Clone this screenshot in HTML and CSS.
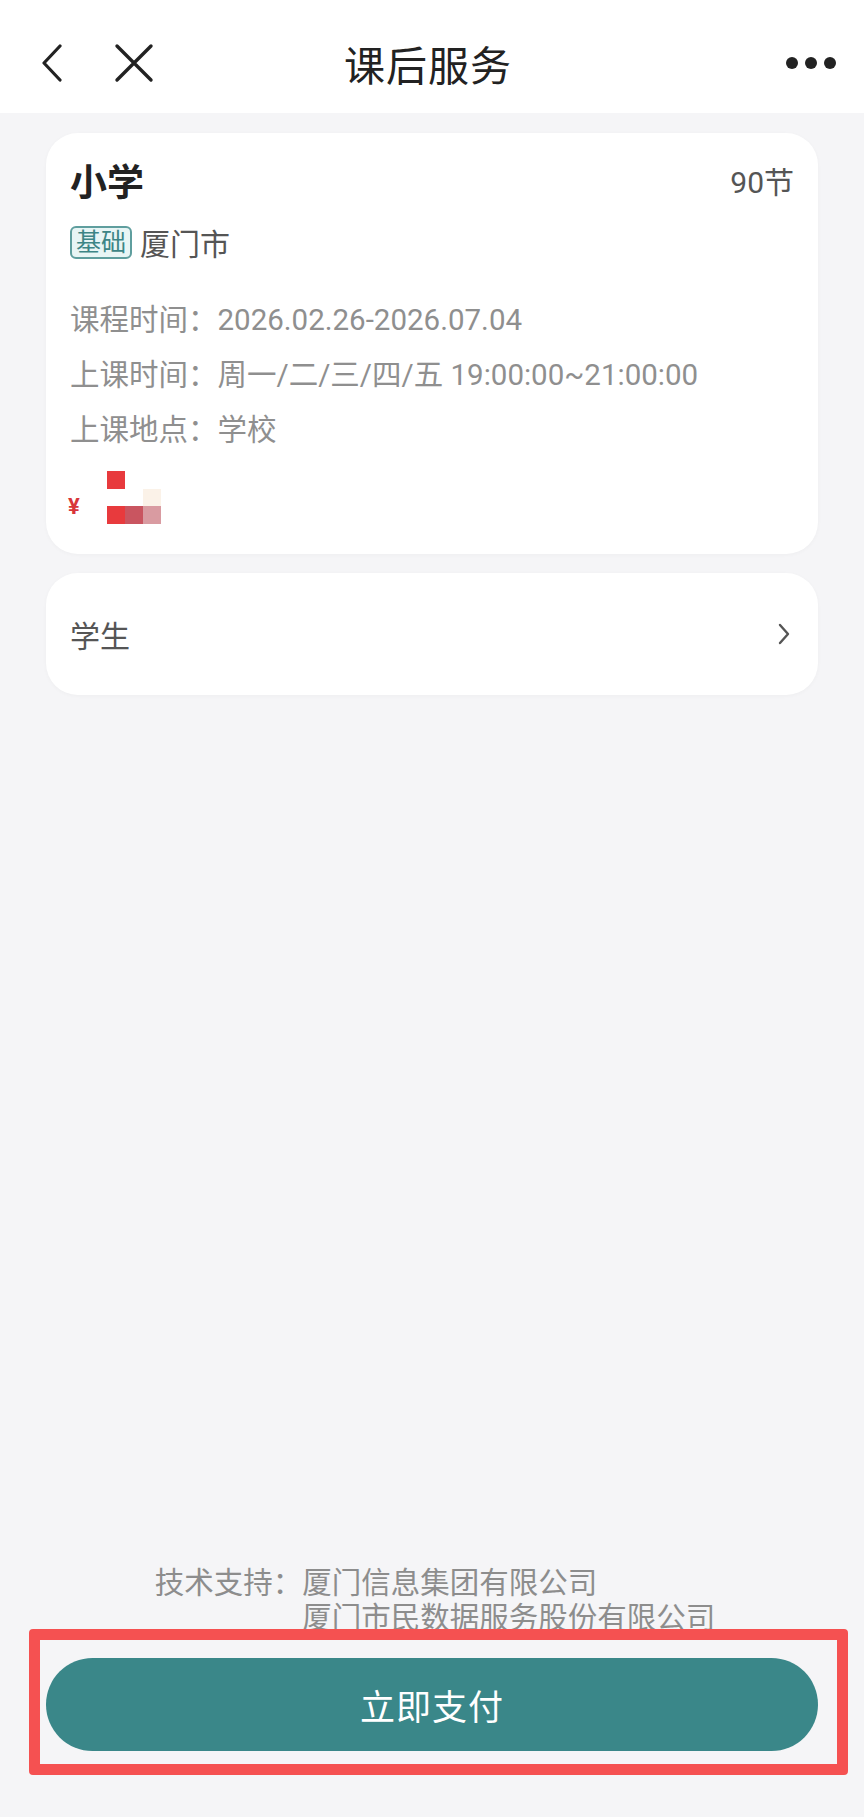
FILE: index.html
```html
<!DOCTYPE html>
<html lang="zh-CN">
<head>
<meta charset="utf-8">
<title>课后服务</title>
<link rel="stylesheet" href="styles.css">
</head>
<body>
<div class="page">
  <header class="topbar">
    <div class="nav-left">
      <svg class="icon-back" width="24" height="38" viewBox="0 0 24 38"><path d="M20 2 L4 19 L20 36" fill="none" stroke="#222" stroke-width="3.2" stroke-linecap="round" stroke-linejoin="round"/></svg>
      <svg class="icon-close" width="40" height="40" viewBox="0 0 40 40"><path d="M3 3 L37 37 M37 3 L3 37" fill="none" stroke="#222" stroke-width="3.4" stroke-linecap="round"/></svg>
    </div>
    <h1 class="title">课后服务</h1>
    <div class="more"><span></span><span></span><span></span></div>
  </header>

  <main class="content">
    <section class="card course">
      <div class="course-head">
        <span class="course-name">小学</span>
        <span class="course-count">90节</span>
      </div>
      <div class="course-loc">
        <span class="tag">基础</span>
        <span class="city">厦门市</span>
      </div>
      <ul class="info">
        <li>课程时间：2026.02.26-2026.07.04</li>
        <li>上课时间：周一/二/三/四/五 19:00:00~21:00:00</li>
        <li>上课地点：学校</li>
      </ul>
      <div class="price">
        <span class="yen">¥</span>
        <div class="mosaic">
          <i class="c1"></i><i></i><i></i>
          <i></i><i></i><i class="c5"></i>
          <i class="c1"></i><i class="c2"></i><i class="c3"></i>
        </div>
      </div>
    </section>

    <section class="card student">
      <span class="student-label">学生</span>
      <svg class="icon-arrow" width="12" height="22" viewBox="0 0 12 22"><path d="M2 2 L10 11 L2 20" fill="none" stroke="#555" stroke-width="2.4" stroke-linecap="round" stroke-linejoin="round"/></svg>
    </section>
  </main>

  <footer class="footer">
    <div class="support">
      <span class="support-label">技术支持：</span>
      <div class="support-names">
        <span>厦门信息集团有限公司</span>
        <span>厦门市民数据服务股份有限公司</span>
      </div>
    </div>
    <div class="highlight">
      <button class="pay">立即支付</button>
    </div>
  </footer>
</div>
</body>
</html>
```

FILE: styles.css
```css
* { box-sizing: border-box; }
html, body { margin: 0; padding: 0; }
body {
  background: #f5f5f7;
  font-family: Roboto, "Noto Sans CJK SC", "Noto Sans", sans-serif;
  color: #222;
}
.page {
  min-height: 1817px;
  display: flex;
  flex-direction: column;
}
.topbar {
  height: 113px;
  background: #fff;
  display: grid;
  grid-template-columns: 1fr auto 1fr;
  align-items: center;
  padding: 12px 28px 0 28px;
}
.nav-left {
  display: flex;
  align-items: center;
  gap: 50px;
  padding-left: 12px;
}
.icon-back { display: block; }
.icon-close { display: block; }
.title {
  margin: 0 8px 0 0;
  font-size: 41px;
  font-weight: 400;
  color: #222;
  letter-spacing: 1px;
}
.more {
  justify-self: end;
  display: flex;
  gap: 7px;
}
.more span {
  width: 12px;
  height: 12px;
  border-radius: 50%;
  background: #222;
}
.content {
  flex: 1;
  padding: 20px 46px 0;
  display: flex;
  flex-direction: column;
  gap: 19px;
}
.card {
  background: #fff;
  border-radius: 32px;
  box-shadow: 0 1px 4px rgba(0,0,0,0.03);
}
.course {
  padding: 20px 24px 30px 24px;
}
.course-head {
  height: 54px;
  display: flex;
  align-items: center;
  justify-content: space-between;
}
.course-name {
  font-size: 37px;
  font-weight: 700;
  color: #222;
}
.course-count {
  font-size: 30px;
  color: #555;
}
.course-loc {
  margin-top: 15px;
  height: 40px;
  display: flex;
  align-items: center;
  gap: 8px;
}
.tag {
  font-size: 25px;
  line-height: 29px;
  padding: 0 4px;
  border: 2px solid #5f9e9e;
  border-radius: 6px;
  background: #e8f5f5;
  color: #3d8586;
}
.city {
  font-size: 30px;
  color: #555;
}
.info {
  list-style: none;
  margin: 31px 0 0;
  padding: 0;
}
.info li {
  font-size: 29.5px;
  line-height: 55px;
  color: #8f8f8f;
  white-space: nowrap;
}
.price {
  margin-top: 13px;
  display: flex;
  align-items: flex-end;
  gap: 27px;
}
.yen {
  font-size: 22px;
  font-weight: 700;
  line-height: 26px;
  color: #d8363a;
  margin-bottom: 4px;
  margin-left: -2px;
}
.mosaic {
  display: grid;
  grid-template-columns: repeat(3, 18px);
  grid-template-rows: repeat(3, 17.5px);
}
.mosaic i { display: block; }
.mosaic .c1 { background: #e83a3d; }
.mosaic .c2 { background: #c95560; }
.mosaic .c3 { background: #d99ba1; }
.mosaic .c5 { background: #fbf2e8; }
.student {
  height: 122px;
  padding: 0 28px 0 24px;
  display: flex;
  align-items: center;
  justify-content: space-between;
}
.student-label {
  font-size: 30px;
  color: #555;
}
.footer {
  display: flex;
  flex-direction: column;
  align-items: center;
}
.support {
  display: flex;
  font-size: 29.5px;
  line-height: 35px;
  color: #8d8d8d;
  margin-left: 6px;
}
.support-names {
  display: flex;
  flex-direction: column;
}
.highlight {
  align-self: stretch;
  margin: -7px 16px 42px 29px;
  border: 11px solid #f55151;
  border-radius: 4px;
  padding: 18px 19px 13px 6px;
}
.pay {
  display: block;
  width: 100%;
  height: 93px;
  border: none;
  border-radius: 47px;
  background: #3a8789;
  color: #fff;
  font-family: "Noto Sans CJK SC", sans-serif;
  font-size: 35px;
  letter-spacing: 1px;
}
```
